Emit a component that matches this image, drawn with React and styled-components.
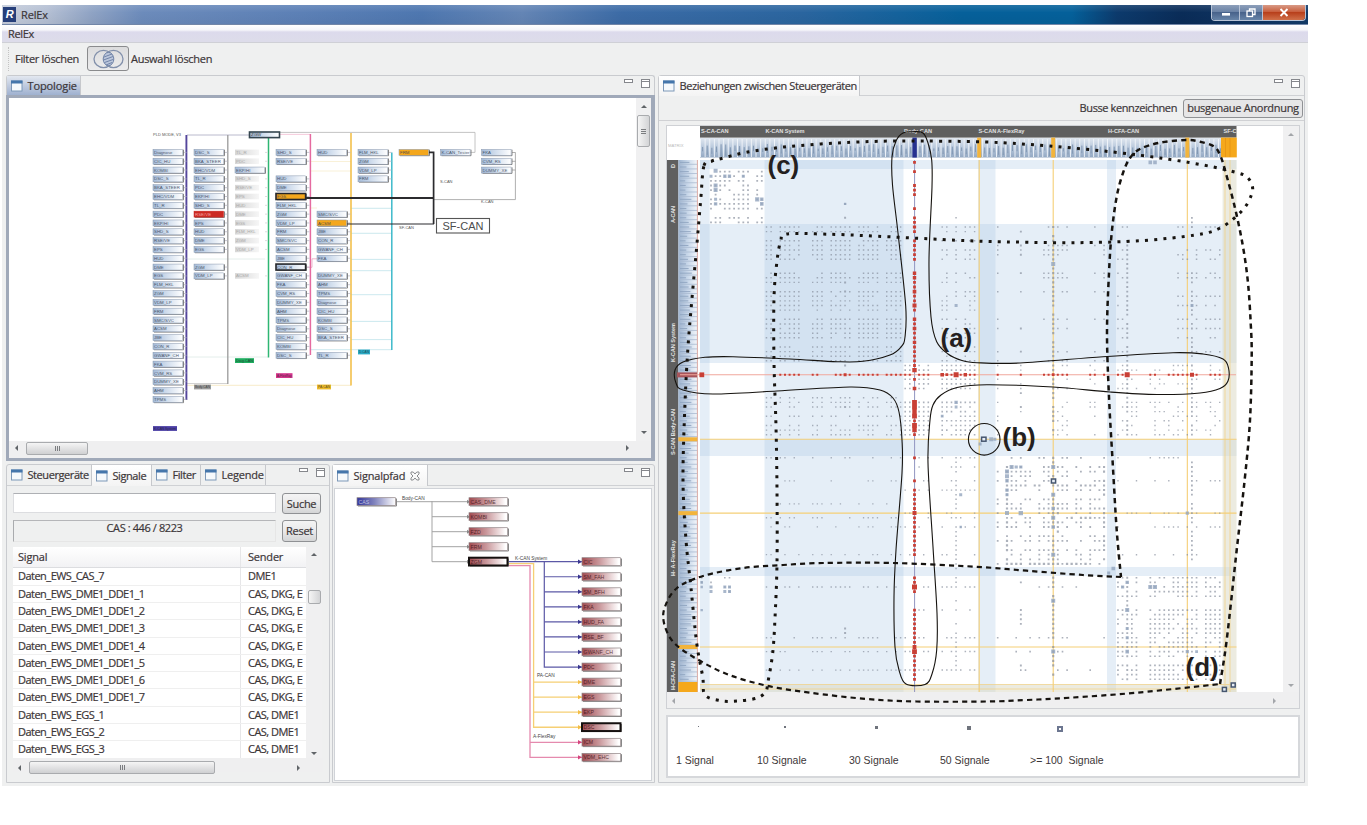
import React from "react";
import styled, { createGlobalStyle } from "styled-components";

const GlobalStyle = createGlobalStyle`
  *, *::before, *::after { box-sizing: border-box; }
  body { margin: 0; background: #fff; overflow: hidden; }
  svg { display: block; flex: none; letter-spacing: 0; -webkit-text-stroke: 0; }
`;

/* ---------- window chrome ---------- */

const Page = styled.div`
  width: 1367px;
  height: 825px;
  padding: 5px 0 0 2px;
  font-family: "Open Sans", "Noto Sans", sans-serif;
  font-size: 11px;
  letter-spacing: -0.4px;
  line-height: 14px;
  color: #3c3638;
  -webkit-text-stroke: 0.2px #3c3638;
  white-space: nowrap;
`;
const Window = styled.div`
  width: 1306px;
  height: 781px;
  background: #eff0f0;
  display: flex;
  flex-direction: column;
`;
const TitleBar = styled.header`
  height: 20px;
  display: flex;
  align-items: center;
  padding-left: 1px;
  border-bottom: 1px solid #7286a8;
  background:
    linear-gradient(rgba(255,255,255,.12), rgba(255,255,255,0) 40%, rgba(0,0,0,.04)),
    linear-gradient(90deg, #c6cddb 0, #b4bfd3 45px, #8fa3c4 90px, #6c8bbb 140px, #5c80b6 300px, #4e77b0 420px, #6485b5 520px, #3c6ba6 620px, #2a659f 800px, #06609a 960px, #04609a 1070px, #0c3a6c 1115px, #0a2c58 1180px, #123a68 1306px);
`;
const Logo = styled.span`
  width: 13px;
  height: 15px;
  background: #263f7a;
  color: #fff;
  font: italic bold 11px/15px "Liberation Sans", sans-serif;
  -webkit-text-stroke: 0;
  text-align: center;
  margin-right: 5px;
`;
const WindowButtons = styled.div`
  display: flex;
  align-self: flex-start;
  margin-left: auto;
  margin-right: 2px;
  border: 1px solid #b7c3d6;
  border-top: 0;
  border-radius: 0 0 4px 4px;
  overflow: hidden;
`;
const WindowButton = styled.span`
  width: ${(p) => p.$w}px;
  height: 15px;
  display: flex;
  align-items: center;
  justify-content: center;
  border-left: ${(p) => (p.$first ? 0 : "1px solid #b7c3d6")};
  background: ${(p) =>
    p.$close
      ? "linear-gradient(#d89a86, #c85f3e 45%, #b8401c 50%, #d0704a)"
      : "linear-gradient(#8d9fba, #6b83a6 45%, #48638b 50%, #6784a8)"};
`;
const MenuBar = styled.nav`
  height: 18px;
  padding: 2px 6px 0;
  background: linear-gradient(#fff 0, #f6f6fa 5px, #dcdaec 7px, #dddcea 15px);
  border-bottom: 1px solid #cfd0d6;
`;
const ToolBar = styled.div`
  height: 31px;
  display: flex;
  align-items: center;
  padding-left: 6px;
  &::before {
    content: "";
    height: 24px;
    border-left: 1px dotted #c3c3c3;
    margin-right: 6px;
  }
`;
const ToolText = styled.span`
  letter-spacing: ${(p) => p.$ls ?? -0.3}px;
  margin-right: ${(p) => p.$mr ?? 0}px;
`;
const VennButton = styled.span`
  width: 42px;
  height: 25px;
  margin-right: 2px;
  border: 1px solid #8a8b8d;
  border-radius: 3px;
  background: linear-gradient(#dcdcdd, #ececed);
  display: flex;
  align-items: center;
  justify-content: center;
`;

/* ---------- panels ---------- */

const Workbench = styled.main`
  flex: 1;
  display: flex;
  gap: 3px;
  padding: 1px 3px 3px 4px;
`;
const LeftColumn = styled.div`
  width: 649px;
  display: flex;
  flex-direction: column;
  gap: 3px;
`;
const BottomRow = styled.div`
  flex: 1;
  display: flex;
  gap: 2px;
`;
const Panel = styled.section`
  width: ${(p) => (p.$w ? p.$w + "px" : "auto")};
  height: ${(p) => (p.$h ? p.$h + "px" : "auto")};
  flex: ${(p) => (p.$w || p.$h ? "none" : 1)};
  display: flex;
  flex-direction: column;
  background: #eff0f0;
  border: ${(p) => (p.$active ? "0" : "1px solid #c9cbcf")};
  border-radius: 3px 3px 0 0;
`;
const TabStrip = styled.div`
  height: ${(p) => p.$h ?? (p.$active ? 20 : 21)}px;
  display: flex;
  align-items: stretch;
  border: ${(p) => (p.$active ? "1px solid #c9cbcf" : "0")};
  border-bottom: ${(p) => (p.$active ? "0" : "1px solid #cfd1d4")};
  border-radius: 3px 3px 0 0;
`;
const Tab = styled.span`
  width: ${(p) => p.$w}px;
  display: flex;
  align-items: center;
  gap: 4.5px;
  padding-left: 4px;
  letter-spacing: ${(p) => p.$ls ?? -0.42}px;
  border-right: 1px solid #c6c8cc;
  margin-bottom: ${(p) => (p.$selected ? "-1px" : 0)};
  background: ${(p) =>
    p.$focus ? "linear-gradient(#e3e8f0, #c0cbdf 50%, #9fb1d0)" : p.$selected ? "linear-gradient(#fff, #f4f4f4)" : "none"};
`;
const StripButtons = styled.span`
  margin: 0 2px 0 auto;
`;
const FocusFrame = styled.div`
  flex: 1;
  border: 3px solid #a0a9b9;
  border-right-width: 4px;
  background: #efeff0;
`;
const Split = styled.div`
  display: flex;
`;
const Canvas = styled.div`
  background: #fff;
  width: ${(p) => p.$w}px;
  height: ${(p) => p.$h}px;
  margin: ${(p) => p.$m ?? 0};
  outline: ${(p) => (p.$frame ? "1px solid #d0d3d8" : "none")};
`;

/* ---------- scroll bars ---------- */

const VScroll = styled.div`
  width: ${(p) => p.$w ?? 14}px;
  display: flex;
  flex-direction: column;
  align-items: center;
  justify-content: space-between;
  padding: ${(p) => p.$p ?? "5px 0"};
  background: #f0f0f1;
`;
const HScroll = styled.div`
  height: 14px;
  display: flex;
  align-items: center;
  justify-content: space-between;
  padding: ${(p) => p.$p ?? "0 6px"};
  background: #efeff0;
`;
const Thumb = styled.span`
  width: ${(p) => p.$w}px;
  height: ${(p) => p.$h}px;
  margin: ${(p) => p.$m ?? 0};
  border: 1px solid #a9abae;
  border-radius: 2px;
  background: ${(p) => (p.$v ? "linear-gradient(90deg, #f5f5f5, #d3d4d6)" : "linear-gradient(#f5f5f5, #e4e4e5 45%, #cfd0d2)")};
  display: flex;
  align-items: center;
  justify-content: center;
`;
const Arrow = ({ dir, color = "#606468" }) => {
  const d = { up: "M0 4L3 1L6 4Z", down: "M0 2L3 5L6 2Z", left: "M4 0L1 3L4 6Z", right: "M2 0L5 3L2 6Z" }[dir];
  return <svg width="6" height="6"><path d={d} fill={color} /></svg>;
};
const Grip = ({ v }) => (
  <svg width="7" height="7" stroke="#7b7d80">
    {[1.5, 3.5, 5.5].map((t) => (v ? <path key={t} d={`M1 ${t}H6`} /> : <path key={t} d={`M${t} 1V6`} />))}
  </svg>
);

/* ---------- signal list ---------- */

const SignalBody = styled.div`
  padding: 7px 6px 0;
`;
const Line = styled.div`
  display: flex;
  gap: 6px;
  margin-bottom: ${(p) => p.$mb}px;
`;
const SearchBox = styled.div`
  width: 263px;
  height: 20px;
  background: #fff;
  border: 1px solid #dcdde0;
  border-top-color: #aeb0b4;
`;
const CountBox = styled.div`
  width: 263px;
  height: 22px;
  text-align: center;
  border: 1px solid #e6e6e6;
  border-top-color: #b5b6b9;
  border-left-color: #a9abae;
`;
const Button = styled.span`
  width: ${(p) => p.$w}px;
  height: ${(p) => p.$h ?? 21}px;
  display: flex;
  align-items: center;
  justify-content: center;
  letter-spacing: ${(p) => p.$ls ?? -0.3}px;
  border: 1px solid #8f9194;
  border-radius: 3px;
  background: ${(p) => (p.$pressed ? "#e6e6e7" : "linear-gradient(#f4f4f4, #e9e9ea 50%, #d4d5d6)")};
`;
const Table = styled.div`
  width: 293px;
  height: 211px;
  background: #fff;
  overflow: hidden;
`;
const TableRow = styled.div`
  display: flex;
  height: ${(p) => (p.$head ? 21.4 : 17.3)}px;
  line-height: ${(p) => (p.$head ? 20 : 16)}px;
  border-bottom: 1px solid ${(p) => (p.$head ? "#dcdde0" : "#efefef")};
  background: ${(p) => (p.$head ? "linear-gradient(#fff, #f2f2f4)" : "#fff")};
  letter-spacing: ${(p) => (p.$head ? -0.2 : -0.52)}px;
`;
const Cell = styled.span`
  width: ${(p) => p.$w}px;
  padding-left: ${(p) => p.$pl}px;
  overflow: hidden;
  border-right: 1px solid ${(p) => (p.$pl === 5 ? "#e6e6e8" : "transparent")};
`;

/* ---------- matrix panel ---------- */

const MatrixToolbar = styled.div`
  height: 25px;
  display: flex;
  align-items: center;
  justify-content: flex-end;
  gap: 6px;
  padding-right: 1px;
  border-bottom: 1px solid #d0d1d4;
`;
const MatrixFrame = styled.div`
  width: 634px;
  height: 584px;
  margin: 4px 0 0 7px;
  border: 1px solid #cfd1d5;
`;
const Legend = styled.div`
  width: 634px;
  height: 63px;
  margin: 6px 0 0 7px;
  padding: 9px 0 0 8px;
  border: 2px solid #d6d8db;
  background: #fff;
  display: flex;
  font: 10.5px/12px "Liberation Sans", Arial, sans-serif;
  -webkit-text-stroke: 0;
  letter-spacing: 0;
  white-space: pre;
`;
const LegendItem = styled.div`
  width: ${(p) => p.$w}px;
  display: flex;
  flex-direction: column;
  justify-content: space-between;
  height: 40px;
`;
const LegendMark = styled.span`
  width: ${(p) => p.$s}px;
  height: ${(p) => p.$s}px;
  margin-left: ${(p) => p.$x}px;
  background: ${(p) => (p.$open ? "#fff" : "#6f737c")};
  border: ${(p) => (p.$open ? "2px solid #6c7690" : "0")};
`;

/* ---------- small icons ---------- */

const ViewIcon = () => (
  <svg width="12" height="12">
    <rect x=".5" y="1" width="10.5" height="10" fill="#f6f9fc" stroke="#7d98b8" />
    <rect x="0" y=".5" width="11.5" height="3" fill="#4576ab" />
  </svg>
);
const MinMax = () => (
  <svg width="29" height="14" fill="#fff" stroke="#85878c">
    <rect x="1.5" y="3.5" width="8" height="3" />
    <rect x="18.5" y="3.5" width="8" height="8" />
    <path d="M18 5.5H27" />
  </svg>
);
const Venn = () => (
  <svg width="36" height="20" fill="none" stroke="#8290ab">
    <ellipse cx="13.5" cy="10" rx="9.5" ry="8.6" strokeWidth="1.3" />
    <ellipse cx="23.5" cy="10" rx="9.5" ry="8.6" strokeWidth="1.3" />
    <ellipse cx="18.5" cy="10" rx="5.3" ry="6.6" fill="#bcc7dc" stroke="#7184a8" />
    <path d="M14 8L22 5M13.5 11L23 7.5M14.5 13.5L23 10.5M16 16L22 13.5" stroke="#7184a8" />
  </svg>
);

/* ---------- topology diagram ---------- */

const range = (a, b) => Array.from({ length: b - a + 1 }, (_, i) => a + i);
const ECU = ["Diagnose", "CIC_HU", "KOMBI", "DSC_S", "BKA_STEER", "EHC/VDM", "TL_R", "PDC", "EKP/HI", "SHD_S", "RSE/VE", "EPS", "HUD", "DME", "EGS", "FLM_HKL", "ZGM", "VDM_LP", "FRM", "SMC/SVC", "ACSM", "JBE", "CON_R", "GWANF_CH", "FKA", "CVM_RS", "DUMMY_XE", "AHM", "TPMS"];

const COLUMNS = [
  { x: 153, rows: range(0, 28) },
  { x: 194, rows: [...range(0, 11), 13, 14] },
  { x: 235, rows: [...range(0, 11), 14], pale: true },
  { x: 276, rows: [0, 1, ...range(3, 23)] },
  { x: 317, rows: [0, ...range(7, 12), ...range(14, 21), 23] },
  { x: 358, rows: range(0, 3) },
  { x: 399, rows: [0] },
  { x: 440.5, rows: [0] },
  { x: 481.5, rows: range(0, 2) },
];
const ORANGE = new Set(["276-5", "317-8", "399-0"]);
const OUTLINED = new Set(["276-5", "276-13"]);

function TopoNode({ x, y, pale, orange, red, outlined, label }) {
  if (pale)
    return (
      <g>
        <rect x={x} y={y - 2.8} width="24" height="5.6" fill="url(#pale)" />
        <text x={x + 1} y={y + 1.6} fontSize="4.4" fill="#aaa">{label}</text>
        <path d={`M${x + 30} ${y}h3`} stroke="#ddd" />
      </g>
    );
  return (
    <g>
      <path d={`M${x + 1} ${y + 3.3}h29.5v-6`} fill="none" stroke="#777" strokeWidth=".9" />
      <rect x={x} y={y - 3} width="29.6" height="6" fill={red ? "#cc2a22" : orange ? "#f4a71c" : "url(#ecu)"}
        stroke={outlined ? "#25262a" : red ? "#cc2a22" : "#8796ac"} strokeWidth={outlined ? 1.6 : 0.5} />
      <text x={x + 1} y={y + 1.6} fontSize="4.4" fill={red ? "#fbb" : "#2f3b50"} fillOpacity=".85">{label}</text>
    </g>
  );
}
const Tag = ({ x, y, w, color, label, ink = "#222" }) => (
  <g>
    <rect x={x} y={y - 2.4} width={w} height="4.8" fill={color} />
    <text x={x + 1} y={y + 1.4} fontSize="3.8" fill={ink} fillOpacity=".75" textLength={w - 2} lengthAdjust="spacingAndGlyphs">{label}</text>
  </g>
);

function Topology() {
  const y0 = 152.4, dy = 8.82;
  return (
    <svg width="627" height="343" viewBox="9 98 627 343" fontFamily="Liberation Sans, sans-serif">
      <defs>
        <linearGradient id="ecu"><stop offset="0" stopColor="#a4bbd9" /><stop offset=".5" stopColor="#d3dfee" /><stop offset="1" stopColor="#fff" /></linearGradient>
        <linearGradient id="pale"><stop offset="0" stopColor="#d6d6d6" /><stop offset="1" stopColor="#f6f6f6" /></linearGradient>
      </defs>
      <text x="153" y="135.6" fontSize="4" fill="#555">PLD MODE, V3</text>
      <g fill="none" strokeWidth=".8">
        <path d="M187 135H249" stroke="#a8a8c0" />
        <path d="M280 132.4H475V152.4H470" stroke="#b5b5b5" />
        <path d="M280 134.4H310" stroke="#f3bcd2" />
        <path d="M187 259H265M187 357H268" stroke="#ddeae6" />
        <path d="M187 383.5H228" stroke="#c8c8c8" />
        <path d="M187 385.3H351" stroke="#f6e6bb" />
        <path d="M311 161.5H351M311 171H351M311 208H317" stroke="#f8edce" />
        <path d="M351 208.3H392M351 233.3H392M351 259.4H392M351 270.7H392M351 294.7H392M351 321.4H392M351 339.6H392M311 349.7H392" stroke="#bfe2ea" />
        <path d="M434 199.6H515.4V152.5M512 152.5h3.5M512 161.3h3.5M512 170h3.5" stroke="#9c9c9c" />
        <path d="M306 267.3h6v-8.5h5" stroke="#e9a3c3" />
      </g>
      <g fill="none">
        <path d="M186.4 135V400" stroke="#54469c" strokeWidth="1.9" />
        <path d="M227.8 135V384" stroke="#9a9a9a" strokeWidth="1.3" />
        <path d="M268.5 137V357.5" stroke="#2fb673" strokeWidth="1.5" />
        <path d="M310.4 134V355" stroke="#e56aa0" strokeWidth="1.5" />
        <path d="M351 133V385.5" stroke="#f3c04c" strokeWidth="1.6" />
        <path d="M391.8 152.4V350" stroke="#3db9ca" strokeWidth="1.5" />
      </g>
      {COLUMNS.map((c) =>
        c.rows.map((r) => {
          const k = `${c.x}-${r}`;
          const y = y0 + dy * r;
          return (
            <g key={k}>
              {c.x < 390 && !c.pale && <path d={`M${c.x + 30} ${y}h3.5`} stroke="#b9b9c6" strokeWidth=".8" />}
              <TopoNode x={c.x} y={y} pale={c.pale && r !== 2} orange={ORANGE.has(k)} red={k === "194-7"}
                outlined={OUTLINED.has(k)} label={c.x === 440.5 ? "K-CAN_Tester" : ECU[(r + Math.floor(c.x / 41) * 3 - 9) % 29]} />
            </g>
          );
        })
      )}
      <rect x="249.5" y="132" width="30" height="5.6" fill="url(#ecu)" stroke="#34454f" strokeWidth="1.6" />
      <text x="251" y="136.4" fontSize="4.4" fill="#333">ZGW</text>
      <g fill="none" stroke="#2b2b2e">
        <path d="M306 198H433.6" strokeWidth="1.8" />
        <path d="M429 152.4H433.6V224" strokeWidth="1.7" />
        <path d="M347 224H434" strokeWidth="1.2" />
      </g>
      <Tag x={235} y={360.6} w={19} color="#1fae60" label="Diag-CAN" />
      <Tag x={276} y={375.6} w={16.5} color="#d3358c" label="A-FlexRay" />
      <Tag x={194} y={387} w={17} color="#9b9b9b" label="Body-CAN" />
      <Tag x={317} y={387} w={14} color="#edba2a" label="PA-CAN" />
      <Tag x={358} y={352} w={12} color="#29a9c4" label="D-CAN" />
      <Tag x={153} y={428.5} w={24} color="#4a3da5" label="K-CAN System" />
      <g fontSize="4" fill="#555">
        <text x="399" y="229.4">SF-CAN</text><text x="440" y="183">S-CAN</text><text x="481" y="202.8">K-CAN</text>
      </g>
      <rect x="436.5" y="218.5" width="53" height="14.5" fill="#fff" stroke="#555" strokeWidth="1.1" />
      <text x="442.5" y="229.8" fontSize="11" fill="#4c4c4c" textLength="41">SF-CAN</text>
    </svg>
  );
}

/* ---------- signal path diagram ---------- */

const PATH_A = ["CAS_DME", "KOMBI", "FZD", "FRM", "ZGM"];
const PATH_B = ["CIC", "SM_FAH", "SM_BFH", "FKA", "HUD_FA", "RSE_BF", "GWANF_CH", "PDC", "DME", "EGS", "EKP", "DSC", "ICM", "VDM_EHC"];

const PathNode = ({ x, y, label, dark, blue }) => (
  <g>
    <path d={`M${x + 1} ${y + 4.3}h38.5v-7.5`} fill="none" stroke="#888" />
    <rect x={x} y={y - 4} width="38.5" height="7.8" fill={blue ? "url(#navy)" : "url(#wine)"} stroke={dark ? "#15100f" : "#8f8385"} strokeWidth={dark ? 2 : 0.7} />
    <text x={x + 1.6} y={y + 1.9} fontSize="5.2" fill={blue ? "#dde" : "#3a1015"} fillOpacity=".8">{label}</text>
  </g>
);
function SignalPath() {
  const yA = (k) => 501.7 + 15 * k;
  const yB = (k) => 561.7 + 15.05 * k;
  return (
    <svg width="316" height="291" viewBox="335 489 316 291" fontFamily="Liberation Sans, sans-serif">
      <defs>
        <linearGradient id="wine"><stop offset="0" stopColor="#a04a50" /><stop offset=".45" stopColor="#c9979b" /><stop offset=".95" stopColor="#fff" /></linearGradient>
        <linearGradient id="navy"><stop offset="0" stopColor="#34369a" /><stop offset=".45" stopColor="#8083bd" /><stop offset="1" stopColor="#fff" /></linearGradient>
      </defs>
      <g fill="none" stroke="#a3a3a3">
        <path d={`M396 501.7H469M432 501V561.7H469M432 ${yA(1)}H469M432 ${yA(2)}H469M432 ${yA(3)}H469`} />
        <g stroke="#e58aae" strokeWidth="1.3">
          <path d={`M508 565.6H530V${yB(13)}H582M530 ${yB(12)}H582`} />
        </g>
        <g stroke="#f6cf74" strokeWidth="1.3">
          <path d={`M508 563.6H533.6V${yB(11)}H582M533.6 ${yB(8)}H582M533.6 ${yB(9)}H582M533.6 ${yB(10)}H582`} />
        </g>
        <g stroke="#5b58a6" strokeWidth="1.2">
          <path d={`M508 561.6H582M544.3 561.6V${yB(7)}H582`} />
          {range(1, 6).map((k) => <path key={k} d={`M544.3 ${yB(k)}H582`} />)}
        </g>
      </g>
      {PATH_A.map((l, k) => <path key={l} d={`M467 ${yA(k) - 2}l3 2l-3 2z`} fill="#888" />)}
      {PATH_B.map((l, k) => <path key={l} d={`M578 ${yB(k) - 2.2}l4 2.2l-4 2.2z`} fill={k < 8 ? "#3a3790" : k < 12 ? "#f3bd45" : "#d5447e"} />)}
      <PathNode x={357} y={501.7} label="CAS" blue />
      {PATH_A.map((l, k) => <PathNode key={l} x={469} y={yA(k)} label={l} dark={k === 4} />)}
      {PATH_B.map((l, k) => <PathNode key={l} x={582} y={yB(k)} label={l} dark={k === 11} />)}
      <g fontSize="4.8" fill="#444">
        <text x="402" y="500.4">Body-CAN</text>
        <text x="515" y="560">K-CAN System</text>
        <text x="537" y="676.8">PA-CAN</text>
        <text x="533" y="737.8">A-FlexRay</text>
      </g>
    </svg>
  );
}

/* ---------- relation matrix ---------- */

const S = 4.625, T = 4.615;
const cx = (i) => 701.7 + S * i;
const cy = (i) => 162.4 + T * i;

const K = [14, 15, 17, 18, 19, 20, 21, 24, 25, 26, 28, 29, 30, 31, 32, 34, 35, 36, 37, 38, 40, 41, 42, 43];
const BODY = [44, 45, 47, 48, 49, 52, 53, 54, 55, 56, 57, 58, 59];
const FLEX = [64, 66, 67, 68, 69, 70, 71, 73, 74, 75, 76, 77, 78, 79, 81, 82, 84, 85, 86, 87];
const LAST = [90, 91, 92, 93, 94, 97, 98, 99, 100, 101, 102, 103, 104, 105, 106, 107, 109, 110, 111, 112];
const A_CAN = [2, 3, 4, 5, 6, 7, 8, 9, 10, 12, 13];

const noise = (a, b) => {
  const v = Math.sin(a * 127.1 + b * 311.7) * 43758.5453;
  return v - Math.floor(v);
};
const symmetric = (a, b) => noise(Math.min(a, b), Math.max(a, b));

// Every entry: rows, columns, share of cells that hold a mark, dot size.
const K_BUSY = [17, 19, 20, 24, 25, 28, 31, 34, 35, 36, 37, 38, 43];
const BLOCKS = [
  [A_CAN, A_CAN, 0.62, 1.8],
  [K, K, 0.85, 1.4],
  [K, [52, 53, 55, 57, 58, 59], 0.65, 1.4],
  [[51, 52, 53, 55, 57, 58, 59], K, 0.72, 1.4],
  [BODY, BODY, 0.86, 1.6],
  [[14, 18, 19, 20, 24, 25, 28, 34, 36, 41, 43], [64, 69, 74, 75, 76, 77, 78, 79, 85, 87], 0.62, 1.5],
  [[14, 19, 20, 21, 24, 25, 29, 31, 34, 36, 38, 41], [90, 91, 92, 103, 104, 105, 106, 107, 109, 110, 111, 112], 0.68, 1.5],
  [[64, 69, 74, 77, 79, 85], K, 0.5, 1.3],
  [[92, 103, 106, 110], K, 0.68, 1.4],
  [BODY, [64, 69, 76, 77, 78, 79, 84, 85], 0.5, 1.4],
  [BODY, LAST, 0.42, 1.4],
  [[64, 66, 69, 71, 76, 77, 79, 85], BODY, 0.45, 1.4],
  [[92, 97, 103, 106, 110], BODY, 0.6, 1.5],
  [FLEX, FLEX, 0.55, 1.8],
  [[64, 69, 76, 79, 85], LAST, 0.4, 1.4],
  [[92, 103, 106, 110], FLEX, 0.4, 1.6],
  [LAST, LAST, 0.75, 1.7],
  [[90, 91, 92, 93], [0, 2, 5, 6], 0.6, 1.6],
];
const column = (c, rows, s = 1.9) => rows.map((r) => [r, c, s]);
const EXTRA = [
  ...column(69, [15, 17, 18, 20, 24, 36, 41, 50, 53, 57, 97, 98, 99, 100, 101, 102, 103, 108, 109, 91, 95]),
  ...column(76, [...range(14, 45), ...range(47, 58), ...range(64, 87), ...range(90, 111)], 2.2),
  ...column(92, [...range(17, 45), ...range(47, 59), ...range(90, 112)], 1.9),
  ...column(106, [12, 13, 14, ...range(24, 44), ...range(47, 59), ...range(64, 86)], 1.8),
  ...column(55, [12, 14, 17, 19, 26, 34, 38, 41, ...range(64, 110)], 1.5),
  ...column(31, [9, 12, 13, 26, 28, 44, 48, 53, 55, 101, 102], 2),
  ...range(66, 85).map((c) => [87, c, 2.3]),
  ...range(70, 85).map((c) => [70, c, 2.1]),
  ...range(80, 84).map((c) => [77, c, 2.2]),
  ...range(66, 86).map((r) => [r, 66, 2.2]),
  ...range(66, 86).map((r) => [r, 87, 2.1]),
  ...range(73, 80).map((r) => [r, 77, 2.1]),
];
const BLUE_MARKS = [
  [1.8, 3, 4], [3, 5, 3.3], [3, 6, 3.3], [3, 9, 3], [5, 3, 4], [6, 3, 4], [8, 12, 4.2], [8, 13, 3.4], [9, 13, 3.6], [9, 3, 3.4], [8, 3, 3], [3, 2, 3],
  [0, 97, 3.6], [0, 98, 3.6], [0, 92, 2.6], [22, 76, 4], [9, 31, 2.4], [31, 55, 3], [31, 106, 3],
  [66, 67, 4], [66, 68, 3.2], [66, 69, 3.2], [67, 66, 4], [68, 66, 4], [69, 66, 3.4], [71, 66, 3.4], [72, 66, 3], [76, 66, 4], [76, 69, 4.4],
  [66, 76, 4], [72, 76, 4], [75, 76, 3.6], [77, 76, 4], [79, 76, 3.6], [85, 76, 4], [95, 76, 4], [106, 76, 4],
  [76, 105, 3.2], [92, 97, 4], [92, 98, 4], [91, 92, 3.4], [92, 91, 3.2], [97, 92, 4], [101, 92, 3], [103, 92, 3], [106, 92, 3.6], [106, 105, 3.2], [106, 107, 2.8],
  [88, 89, 3.6], [89, 88, 3], [60, 62.6, 4], [60, 63.4, 3], [61, 60.2, 3], [52, 55, 3.4], [53, 55, 2.8], [55, 52, 2.8], [72, 56, 3], [79, 56, 2.4],
  [91, 0, 2.6], [92, 0, 2.4], [92, 2, 3], [93, 2, 3], [92, 5, 3], [92, 6, 3], [93, 5, 3], [93, 6, 3], [97, 0, 2.4],
];
const RED_INDEX = [0, 2, 5, 6, 7, 10, 12, 13, 14, 15, ...range(17, 21), ...range(24, 32), ...range(34, 45), 47, 49, ...range(52, 59), 64, 69, ...range(71, 85), 90, 91, 92, 93, ...range(97, 112)];
const RED_BIG = { 14: 3.2, 24: 3.4, 25: 3.4, 28: 3.6, 31: 4, 34: 3.4, 36: 3.6, 39: 3.4, 45: 4.4, 49: 3.6, 52: 4.8, 53: 4.8, 54: 4.4, 55: 4.8, 57: 4.8, 58: 4.4, 76: 4, 92: 5, 105: 3.8, 106: 4.8 };
const RED_ROW = [17, 18, 19, 20, 21, 24, 25, 29, 30, 31, 32, 34, 35, 36, 37, 38, 40, 41, 42, 43, 44, 45, 47, 48, 49, 52, 53, 54, 55, 56, 57, 58, 59, 64, 69, 74, 75, 76, 77, 78, 79, 84, 85, 87, 90, 91, 92, 97, 98, 101, 102, 103, 104, 105, 106, 107, 110, 111, 112];
const RED_ROW_BIG = { 31: 3, 52: 3.6, 53: 2.8, 55: 5, 57: 3.4, 76: 2.8, 92: 5, 106: 4 };

function buildDots() {
  const seen = new Map();
  BLOCKS.forEach(([rows, cols, share, size]) =>
    rows.forEach((r) => cols.forEach((c) => {
      if (symmetric(r, c) < share) seen.set(r + "," + c, [r, c, K_BUSY.includes(r) && size < 1.5 ? size + 0.1 : size]);
    }))
  );
  EXTRA.forEach(([r, c, s]) => { if (noise(r, c) < 0.82) seen.set(r + "," + c, [r, c, s]); });
  return [...seen.values()].filter(([r, c]) => r !== 46 && c !== 46);
}
const DOTS = buildDots();
const dotPath = (list) => list.map(([r, c, s]) => `M${(cx(c) - s / 2).toFixed(1)} ${(cy(r) - s / 2).toFixed(1)}h${s}v${s}h-${s}z`).join("");

// Catmull-Rom spline through the given points.
function spline(pts, closed) {
  const n = pts.length;
  const at = (i) => (closed ? pts[(i + n) % n] : pts[Math.max(0, Math.min(n - 1, i))]);
  let d = `M${pts[0]}`;
  for (let i = 0; i < (closed ? n : n - 1); i++) {
    const [a, b, c, e] = [at(i - 1), at(i), at(i + 1), at(i + 2)];
    d += `C${b[0] + (c[0] - a[0]) / 6} ${b[1] + (c[1] - a[1]) / 6} ${c[0] - (e[0] - b[0]) / 6} ${c[1] - (e[1] - b[1]) / 6} ${c[0]} ${c[1]}`;
  }
  return d;
}
const CROSS = [[903, 133], [896, 141], [892, 157], [892.5, 185], [898, 233], [905.7, 306], [905, 337], [901, 347], [890, 355], [863, 361.3], [837, 361.7], [790, 359], [733, 356.7], [705, 357.3], [683, 362], [675, 370], [676, 383], [683, 390], [713, 394], [777, 391], [850, 387], [880, 390], [893, 398], [899, 412], [902, 440], [902, 473], [896, 550], [894, 597], [895, 647], [899, 670], [906, 684], [925, 684.5], [932, 674], [936.7, 650], [937, 613], [933, 547], [928, 463], [930, 420], [933, 405], [941, 395], [957, 387.5], [987, 384.7], [1053, 387], [1110, 392], [1157, 394.5], [1200, 393], [1220, 388.5], [1228, 381], [1228.5, 368], [1223, 359], [1203, 354], [1173, 352.7], [1103, 356.7], [1020, 363], [977, 362.7], [962, 360.5], [948, 354], [936.7, 341.7], [931, 317], [929, 260], [932, 187], [931.7, 160], [928, 143], [923, 133], [913, 131.7]];
const DOTTED = [[704, 165.7], [712, 161], [720.7, 158.7], [747.7, 152], [784, 147], [820.7, 144], [857, 142], [903, 141], [985, 142], [1049, 146], [1113, 152], [1167, 159], [1212, 166.7], [1238, 173], [1247, 177], [1252, 185], [1251.7, 194], [1242.7, 210], [1220.7, 227.7], [1195, 235], [1140.7, 240.7], [1076.7, 242.7], [1013, 242], [966.7, 240.7], [866.7, 235.7], [820.7, 234], [786, 234], [780.7, 241], [777, 261], [774, 297.7], [774, 361.7], [776, 426.7], [777, 490], [777, 563], [775, 618], [772.7, 653], [768, 681.7], [765.7, 691.7], [757, 698], [738, 701], [720.7, 700.7], [705, 695], [702.7, 676.7], [696.7, 643], [690.7, 585], [686, 540], [683, 480], [685, 403], [688, 347], [691.7, 301.7], [696.7, 246.7], [700.7, 200]];
const DASH_A = [[1220, 684], [1226.7, 640], [1236.7, 550], [1245, 476.7], [1250, 420], [1251.7, 356.7], [1250.7, 323], [1248, 283], [1243, 246.7], [1235, 208], [1225, 170], [1220, 155], [1214, 146.5], [1200, 141.7], [1186, 140], [1160, 142.7], [1140, 149], [1130, 158], [1123, 173], [1116.7, 196.7], [1111.7, 233], [1109, 273], [1107, 333], [1109, 397], [1112.7, 463], [1116.7, 530], [1121, 577]];
const DASH_B = [[1121, 577], [1083, 575], [1026.7, 570.7], [975, 566.7], [893, 563], [823, 563], [783, 565], [743, 568], [703, 576], [677, 588], [665, 606.7], [664, 623], [673, 641.7], [693, 656.7], [726.7, 674], [766.7, 685.7], [810, 692.7], [866.7, 699], [916.7, 701.5], [986.7, 701.5], [1026.7, 700], [1070, 697.7], [1136.7, 692.7], [1220, 684]];

const HEADER_MARKS = [60, 76, 105];

function Matrix() {
  const hair = range(0, 112);
  return (
    <svg width="616" height="566" viewBox="667 126 616 566" overflow="visible" fontFamily="Liberation Sans, sans-serif">
      <defs>
        <linearGradient id="headV" x1="0" y1="0" x2="0" y2="1"><stop offset="0" stopColor="#dfe6ef" /><stop offset=".55" stopColor="#b4c5da" /><stop offset="1" stopColor="#93a8c2" /></linearGradient>
        <linearGradient id="headH"><stop offset="0" stopColor="#9db3cf" /><stop offset=".5" stopColor="#c9d8ea" /><stop offset="1" stopColor="#f3f6fa" /></linearGradient>
      </defs>
      {/* bus bands */}
      <g fill="#aac6e6" fillOpacity=".3">
        <rect x="700" y="160" width="536.5" height="9" />
        <rect x="700" y="224" width="536.5" height="139" />
        <rect x="700" y="439" width="536.5" height="17" />
        <rect x="700" y="567" width="536.5" height="9" />
        <rect x="700" y="160" width="9.6" height="532" />
        <rect x="764.5" y="160" width="139" height="532" />
        <rect x="978" y="160" width="17.5" height="532" />
        <rect x="1107" y="160" width="9" height="532" />
      </g>
      <g fill="#dcdac6" fillOpacity=".55">
        <rect x="1222.6" y="160" width="13.9" height="532" />
        <rect x="700" y="684" width="536.5" height="8" />
      </g>
      <g stroke="#f5cf77" strokeWidth="1.1">
        {HEADER_MARKS.map((i) => <path key={i} d={`M${cx(i)} 160V692M700 ${cy(i)}H1236.5`} />)}
        <path d="M1225 160V692M1230 160V692M700 684.5H1236M700 689H1236" strokeOpacity=".6" />
      </g>
      {/* column header */}
      <rect x="700" y="126" width="536.5" height="11.6" fill="#5f5f5f" />
      <rect x="700" y="138" width="522" height="19.5" fill="url(#headV)" />
      <path d={hair.map((i) => `M${cx(i) - 1.2} 139V157`).join("")} stroke="#f3f6fa" strokeWidth=".9" />
      <path d={hair.map((i) => `M${cx(i) + 0.9} ${144 + 5 * noise(i, 3)}V${150 + 6 * noise(i, 7)}`).join("")} stroke="#7e93ae" strokeWidth=".9" />
      <rect x="912.4" y="137.6" width="4.4" height="20" fill="#26318f" />
      {HEADER_MARKS.map((i) => <rect key={i} x={cx(i) - 2} y="137.6" width="4" height="20" fill="#f2b43c" />)}
      <rect x="1221" y="137.6" width="15.8" height="19.8" fill="#f5a81c" />
      <path d="M1225.5 138V157M1230 138V157" stroke="#e08c10" strokeWidth=".6" />
      <g fontSize="5.6" fontWeight="bold" fill="#e2e2e2">
        <text x="701" y="133.4">S-CA-CAN</text><text x="765.5" y="133.4" textLength="39">K-CAN System</text><text x="904" y="133.4">Body-CAN</text>
        <text x="978.5" y="133.4">S-CAN</text><text x="997" y="133.4">A-FlexRay</text><text x="1108" y="133.4">H-CFA-CAN</text><text x="1223.5" y="133.4">SF-C</text>
      </g>
      {/* row header */}
      <rect x="667" y="160" width="11.4" height="532" fill="#5f5f5f" />
      <rect x="678.4" y="160" width="19" height="524" fill="url(#headH)" />
      <path d={hair.map((i) => `M679 ${cy(i) + 1.9}H697`).join("")} stroke="#a9bad0" strokeWidth=".8" />
      <path d={hair.map((i) => `M680 ${cy(i)}h${5 + 7 * noise(i, 5)}`).join("")} stroke="#8fa4c0" strokeWidth=".9" />
      <path d="M697.4 160V692" stroke="#d9a9a4" strokeWidth="1" />
      <rect x="677" y="372.4" width="20" height="5" fill="#a8545a" />
      {HEADER_MARKS.map((i) => <rect key={i} x="678.4" y={cy(i) - 2} width="19" height="4" fill="#f2b43c" />)}
      <rect x="678.4" y="682" width="19" height="10" fill="#f5a81c" />
      <g fontSize="5.6" fontWeight="bold" fill="#e2e2e2">
        {[["D", 168, 4], ["A-CAN", 223, 17], ["K-CAN System", 362, 39], ["S-CAN Body-CAN", 455, 46], ["H- A-FlexRay", 576, 36], ["H-CFA-CAN", 690, 29]].map(([t, y, w]) => (
          <text key={t} transform={`translate(674.6 ${y}) rotate(-90)`} textLength={w}>{t}</text>
        ))}
      </g>
      <text x="668" y="146.5" fontSize="4.2" fill="#bbb">MATRIX</text>
      {/* relations */}
      <path d={dotPath(DOTS)} fill="#868d9c" fillOpacity=".68" />
      <path d={dotPath(BLUE_MARKS)} fill="#93a5be" fillOpacity=".8" />
      <path d="M914.6 160V692" stroke="#9094c0" strokeWidth="1" />
      <path d="M680 374.7H1236" stroke="#f0a79c" strokeWidth="1.1" />
      <path fill="#c93f35" d={dotPath(RED_INDEX.map((r) => [r, 46, RED_BIG[r] ?? 2.8]))} />
      <path fill="#c93f35" d={dotPath(RED_ROW.map((c) => [46, c, RED_ROW_BIG[c] ?? 2]))} />
      <rect x="699.4" y="372.4" width="4.8" height="4.8" fill="#c93f35" />
      <g fill="#e8eef6" stroke="#46566f" strokeWidth="1.5">
        <rect x="981.6" y="437.2" width="4.4" height="4" />
        <rect x="1051.4" y="479" width="4.2" height="4" />
        <rect x="1222.4" y="687.4" width="4" height="4" />
        <rect x="1231.2" y="683" width="4" height="4" />
      </g>
      {/* annotations */}
      <g fill="none" stroke="#16130f">
        <path d={spline(CROSS, true)} strokeWidth="1.1" />
        <circle cx="984.2" cy="439.3" r="15.8" strokeWidth="1.1" />
        <path d={spline(DOTTED, true)} strokeWidth="3" strokeDasharray="3 6.2" />
        <path d={spline(DASH_A)} strokeWidth="2.5" strokeDasharray="5.2 4.2" />
        <path d={spline(DASH_B)} strokeWidth="2.2" strokeDasharray="5.2 4.1" />
      </g>
      <g fontSize="26" fontWeight="bold" fill="#241f20">
        <text x="767.5" y="173.5">(c)</text>
        <text x="940.5" y="346.5">(a)</text>
        <text x="1002.5" y="446">(b)</text>
        <text x="1185.5" y="675.5">(d)</text>
      </g>
    </svg>
  );
}

/* ---------- data ---------- */

const ROWS = [
  ["Daten_EWS_CAS_7", "DME1"],
  ...range(1, 7).map((n) => [`Daten_EWS_DME1_DDE1_${n}`, "CAS, DKG, E"]),
  ...range(1, 3).map((n) => [`Daten_EWS_EGS_${n}`, "CAS, DME1"]),
];
const LEGEND = [
  { text: "1 Signal", w: 81, x: 22, s: 1 },
  { text: "10 Signale", w: 92, x: 27, s: 2 },
  { text: "30 Signale", w: 91, x: 26, s: 3 },
  { text: "50 Signale", w: 90, x: 27, s: 4 },
  { text: ">= 100  Signale", w: 100, x: 27, s: 6, open: true },
];

export default function App() {
  return (
    <Page>
      <GlobalStyle />
      <Window>
        <TitleBar>
          <Logo>R</Logo>
          <ToolText $ls={-0.15}>RelEx</ToolText>
          <WindowButtons>
            <WindowButton $w={27} $first>
              <svg width="10" height="8"><rect x="1" y="4" width="8" height="2.6" fill="#fff" /></svg>
            </WindowButton>
            <WindowButton $w={23}>
              <svg width="10" height="10" fill="none" stroke="#fff" strokeWidth="1.3"><path d="M3.5 3V1H9V6.5H7" /><rect x="1" y="3" width="5.5" height="5.5" /></svg>
            </WindowButton>
            <WindowButton $w={43} $close>
              <svg width="10" height="9" stroke="#fff" strokeWidth="1.9"><path d="M1.5 1L8.5 8M8.5 1L1.5 8" /></svg>
            </WindowButton>
          </WindowButtons>
        </TitleBar>
        <MenuBar><ToolText $ls={-0.35}>RelEx</ToolText></MenuBar>
        <ToolBar>
          <ToolText $mr={8}>Filter löschen</ToolText>
          <VennButton><Venn /></VennButton>
          <ToolText $ls={-0.3}>Auswahl löschen</ToolText>
        </ToolBar>
        <Workbench>
          <LeftColumn>
            <Panel $h={386} $active>
              <TabStrip $active>
                <Tab $w={74} $focus $ls={-0.1}><ViewIcon />Topologie</Tab>
                <StripButtons><MinMax /></StripButtons>
              </TabStrip>
              <FocusFrame>
                <Split>
                  <Canvas $w={627} $h={343}><Topology /></Canvas>
                  <VScroll $w={15} $p="6px 0">
                    <Arrow dir="up" />
                    <Thumb $v $w={13} $h={32} $m="-277px 0 0"><Grip v /></Thumb>
                    <Arrow dir="down" />
                  </VScroll>
                </Split>
                <HScroll $p="0 21px 0 5px">
                  <Arrow dir="left" />
                  <Thumb $w={62} $h={13} $m="0 auto 0 6px"><Grip /></Thumb>
                  <Arrow dir="right" />
                </HScroll>
              </FocusFrame>
            </Panel>
            <BottomRow>
              <Panel $w={324}>
                <TabStrip>
                  <Tab $w={85}><ViewIcon />Steuergeräte</Tab>
                  <Tab $w={60} $selected><ViewIcon />Signale</Tab>
                  <Tab $w={49}><ViewIcon />Filter</Tab>
                  <Tab $w={65} $ls={-0.2}><ViewIcon />Legende</Tab>
                  <StripButtons><MinMax /></StripButtons>
                </TabStrip>
                <SignalBody>
                  <Line $mb={6}><SearchBox /><Button $w={39}>Suche</Button></Line>
                  <Line $mb={5}><CountBox>CAS : 446 / 8223</CountBox><Button $w={35} $h={22}>Reset</Button></Line>
                  <Split>
                    <Table>
                      <TableRow $head><Cell $w={228} $pl={5}>Signal</Cell><Cell $w={65} $pl={7}>Sender</Cell></TableRow>
                      {ROWS.map(([a, b]) => (
                        <TableRow key={a}><Cell $w={228} $pl={5}>{a}</Cell><Cell $w={65} $pl={7}>{b}</Cell></TableRow>
                      ))}
                    </Table>
                    <VScroll $w={16} $p="5px 0 2px">
                      <Arrow dir="up" />
                      <Thumb $v $w={13} $h={14} $m="-114px 0 0" />
                      <Arrow dir="down" />
                    </VScroll>
                  </Split>
                  <HScroll $p="5px 22px 0 4px">
                    <Arrow dir="left" />
                    <Thumb $w={186} $h={13} $m="0 auto 0 6px"><Grip /></Thumb>
                    <Arrow dir="right" />
                  </HScroll>
                </SignalBody>
              </Panel>
              <Panel>
                <TabStrip>
                  <Tab $w={95} $selected $ls={-0.2}>
                    <ViewIcon />Signalpfad
                    <svg width="10" height="10" fill="none" stroke="#8b8d90"><path d="M1 1H3.2L5 3L6.8 1H9V3L7 5L9 7V9H6.8L5 7L3.2 9H1V7L3 5L1 3Z" /></svg>
                  </Tab>
                  <StripButtons><MinMax /></StripButtons>
                </TabStrip>
                <Canvas $w={316} $h={291} $m="3px 0 0 2px" $frame><SignalPath /></Canvas>
              </Panel>
            </BottomRow>
          </LeftColumn>
          <Panel>
            <TabStrip $h={20}>
              <Tab $w={201} $selected $ls={-0.43}><ViewIcon />Beziehungen zwischen Steuergeräten</Tab>
              <StripButtons><MinMax /></StripButtons>
            </TabStrip>
            <MatrixToolbar>
              <ToolText $ls={-0.4}>Busse kennzeichnen</ToolText>
              <Button $w={120} $h={19} $pressed $ls={-0.3}>busgenaue Anordnung</Button>
            </MatrixToolbar>
            <MatrixFrame>
              <Split>
                <Canvas $w={616} $h={566}><Matrix /></Canvas>
                <VScroll $w={16} $p="6px 0 4px">
                  <Arrow dir="up" color="#a3a6aa" />
                  <Arrow dir="down" color="#a3a6aa" />
                </VScroll>
              </Split>
              <HScroll $p="3px 22px 0 4px">
                <Arrow dir="left" color="#a3a6aa" />
                <Arrow dir="right" color="#a3a6aa" />
              </HScroll>
            </MatrixFrame>
            <Legend>
              {LEGEND.map((l) => (
                <LegendItem key={l.text} $w={l.w}>
                  <LegendMark $s={l.s} $x={l.x} $open={l.open} />
                  <span>{l.text}</span>
                </LegendItem>
              ))}
            </Legend>
          </Panel>
        </Workbench>
      </Window>
    </Page>
  );
}
